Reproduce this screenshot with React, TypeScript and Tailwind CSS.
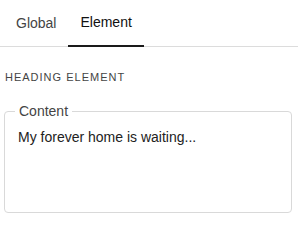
export default function App() {
  return (
    <div className="w-[298px] h-[227px] bg-white font-['Liberation_Sans',Arial,sans-serif] text-[#222]">
      <div className="flex border-b border-[#dcdcdc] px-1 h-[47px]">
        <div className="px-3 flex items-center text-[14px] text-[#444]">Global</div>
        <div className="px-3 flex items-center text-[14px] text-[#111] border-b-2 border-[#1a1a1a] -mb-px">Element</div>
      </div>
      <div className="pl-[5px] pt-[24px] text-[11px] tracking-[1px] text-[#444] uppercase leading-[13px]">Heading Element</div>
      <fieldset className="ml-1 mr-[6px] mt-[19px] border border-[#d9d9d9] rounded-[4px] h-[110px] pl-[10px] pr-[13px] pb-2">
        <legend className="px-[4px] text-[14px] text-[#444] leading-[16px]">Content</legend>
        <div className="pl-[3px] pt-[9px] text-[14px] text-[#222] leading-[18px]">My forever home is waiting...</div>
      </fieldset>
    </div>
  );
}
